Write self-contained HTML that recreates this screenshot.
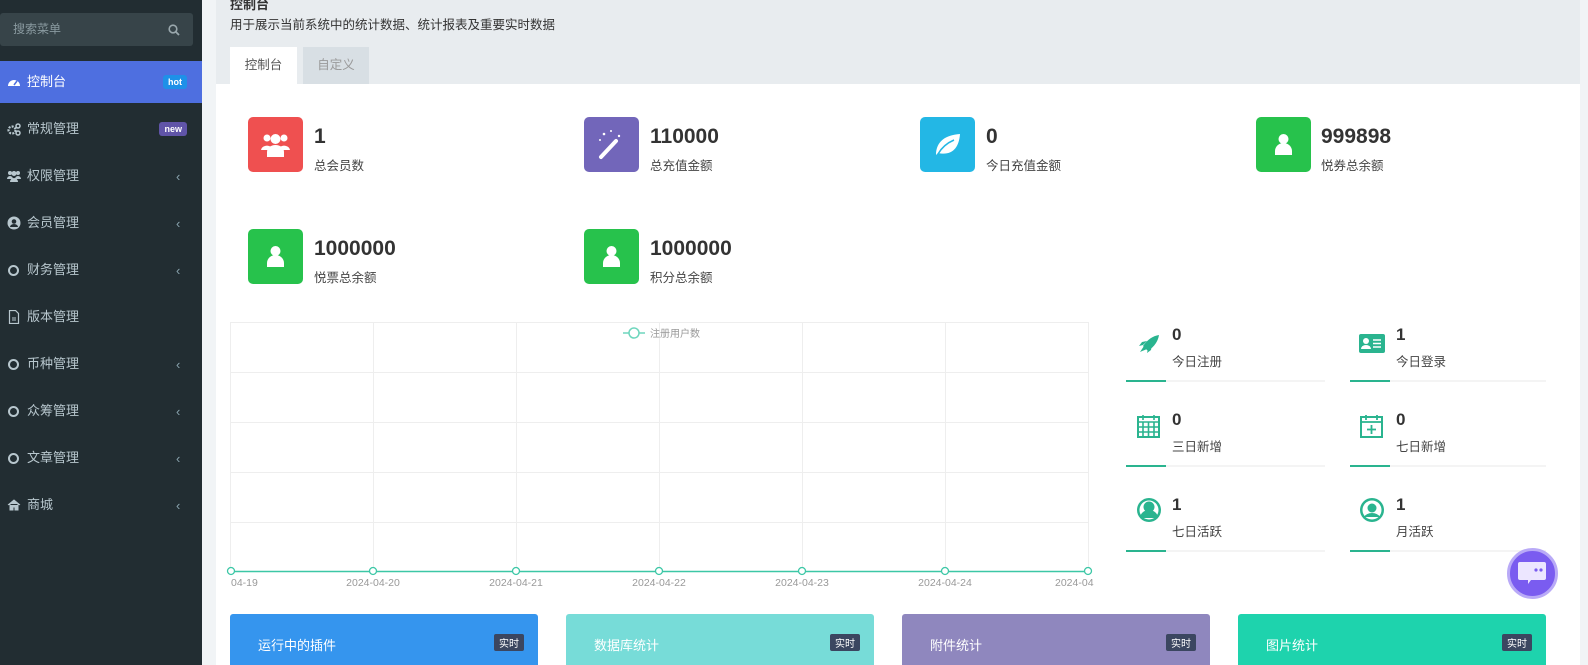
<!DOCTYPE html>
<html><head><meta charset="utf-8"><style>
*{margin:0;padding:0;box-sizing:border-box}
body{width:1588px;height:665px;overflow:hidden;background:#f1f4f6;font-family:"Liberation Sans","Noto Sans CJK SC",sans-serif;position:relative}
.a{position:absolute}
#sb{left:0;top:0;width:202px;height:665px;background:#222d32}
.mi{position:absolute;left:0;width:202px;height:42px;color:#b8c7ce;font-size:13px;line-height:42px;padding-left:27px}
.mi svg{position:absolute;left:7px;top:14px}
.mi .ar{position:absolute;left:176px;top:1px;font-size:13px;color:#8aa4af}
.badge{position:absolute;right:15px;top:14px;height:14px;line-height:14px;font-size:9px;font-weight:bold;color:#fff;padding:0 5px;border-radius:3px}
.circ{position:absolute;left:8px;top:16px;width:11px;height:11px;border:2px solid #b8c7ce;border-radius:50%}
.sq{left:248px;width:55px;height:55px;border-radius:5px}
.num{font-size:21px;font-weight:bold;color:#333}
.lbl{font-size:12.5px;color:#444}
.rs .n{font-size:17px;color:#333;font-weight:bold}
.rs .l{font-size:12.5px;color:#444}
.card{top:614px;height:51px;border-radius:3px 3px 0 0;color:#fff;font-size:13px}
.card span.t{position:absolute;left:28px;top:21px}
.card span.b{position:absolute;right:14px;top:20px;background:#3b4660;font-size:10px;padding:1px 5px;border-radius:2px}
.xl{font-size:10.5px;color:#999;top:577px;width:80px;text-align:center}
</style></head><body>
<div id="sb" class="a">
 <div class="a" style="left:0;top:13px;width:193px;height:33px;background:#374449;border-radius:3px;color:#8a9aa0;font-size:12px;line-height:33px;padding-left:13px">搜索菜单
  <svg class="a" style="left:168px;top:11px" width="12" height="12" viewBox="0 0 12 12"><circle cx="5" cy="5" r="3.8" fill="none" stroke="#9aa8ad" stroke-width="1.6"/><path d="M8 8l3 3" stroke="#9aa8ad" stroke-width="1.8"/></svg></div>
 <div class="mi" style="top:61px;background:#4e6fe0;color:#fff"><svg width="14" height="14"><path d="M1 11a6 6 0 0 1 12 0z" fill="#fff"/><path d="M7 10l3-4" stroke="#4e6fe0" stroke-width="1.5"/></svg>控制台<span class="badge" style="background:#1e90e8">hot</span></div>
 <div class="mi" style="top:108px"><svg width="14" height="14"><circle cx="5" cy="8" r="3.5" fill="none" stroke="#b8c7ce" stroke-width="2.2" stroke-dasharray="2 1.2"/><circle cx="11" cy="4" r="2" fill="none" stroke="#b8c7ce" stroke-width="1.5"/><circle cx="11" cy="11" r="2" fill="none" stroke="#b8c7ce" stroke-width="1.5"/></svg>常规管理<span class="badge" style="background:#6054a8">new</span></div>
 <div class="mi" style="top:155px"><svg width="14" height="14"><g fill="#b8c7ce"><circle cx="3" cy="4" r="2"/><circle cx="11" cy="4" r="2"/><circle cx="7" cy="4.5" r="2.5"/><path d="M0 10a3 3 0 0 1 6 0zM8 10a3 3 0 0 1 6 0zM3 13a4 4 0 0 1 8 0z"/></g></svg>权限管理<span class="ar">‹</span></div>
 <div class="mi" style="top:202px"><svg width="14" height="14"><circle cx="7" cy="7" r="6.5" fill="#b8c7ce"/><circle cx="7" cy="5.5" r="2.3" fill="#222d32"/><path d="M3 11a4 3 0 0 1 8 0z" fill="#222d32"/></svg>会员管理<span class="ar">‹</span></div>
 <div class="mi" style="top:249px"><span class="circ"></span>财务管理<span class="ar">‹</span></div>
 <div class="mi" style="top:296px"><svg width="14" height="14"><path d="M2.5 0.5h6l3 3v10h-9z" fill="none" stroke="#b8c7ce" stroke-width="1.2"/><path d="M5 8h4M5 10h4" stroke="#b8c7ce"/></svg>版本管理</div>
 <div class="mi" style="top:343px"><span class="circ"></span>币种管理<span class="ar">‹</span></div>
 <div class="mi" style="top:390px"><span class="circ"></span>众筹管理<span class="ar">‹</span></div>
 <div class="mi" style="top:437px"><span class="circ"></span>文章管理<span class="ar">‹</span></div>
 <div class="mi" style="top:484px"><svg width="14" height="14"><path d="M1 7l6-5 6 5M3 6v6h3v-3h2v3h3V6" fill="#b8c7ce" stroke="#b8c7ce" stroke-width="1"/></svg>商城<span class="ar">‹</span></div>
</div>
<div class="a" style="left:216px;top:0;width:1364px;height:84px;background:#e8ecef"></div>
<div class="a" style="left:230px;top:-6px;font-size:13px;font-weight:bold;color:#333">控制台</div>
<div class="a" style="left:230px;top:14px;font-size:12.5px;color:#333">用于展示当前系统中的统计数据、统计报表及重要实时数据</div>
<div class="a" style="left:230px;top:47px;width:67px;height:37px;background:#fff;color:#555;font-size:12.5px;text-align:center;line-height:37px">控制台</div>
<div class="a" style="left:303px;top:47px;width:66px;height:37px;background:#d8dfe4;color:#999;font-size:12.5px;text-align:center;line-height:37px">自定义</div>
<div class="a" style="left:216px;top:84px;width:1364px;height:581px;background:#fff"></div>

<div class="a sq" style="top:117px;background:#ef5050"><svg width="55" height="55"><g fill="#fff"><circle cx="19" cy="21" r="3.5"/><circle cx="36" cy="21" r="3.5"/><circle cx="27.5" cy="22" r="5"/><path d="M13 33a6 5 0 0 1 10-3v3zM42 33a6 5 0 0 0-10-3v3z"/><path d="M19 40v-5a8.5 7 0 0 1 17 0v5z"/></g></svg></div>
<div class="a num" style="left:314px;top:125px">1</div><div class="a lbl" style="left:314px;top:155px">总会员数</div>
<div class="a sq" style="left:584px;top:117px;background:#7266ba"><svg width="55" height="55"><path d="M17 40l15-16" stroke="#fff" stroke-width="4" stroke-linecap="round"/><g fill="#fff"><circle cx="20" cy="17" r="1.3"/><circle cx="27" cy="14" r="1"/><circle cx="16" cy="23" r="1"/><circle cx="35" cy="19" r="1.2"/></g></svg></div>
<div class="a num" style="left:650px;top:125px">110000</div><div class="a lbl" style="left:650px;top:155px">总充值金额</div>
<div class="a sq" style="left:920px;top:117px;background:#23b7e5"><svg width="55" height="55"><path d="M16 38c0-14 10-20 24-21-1 14-8 22-22 19z" fill="#fff"/><path d="M18 37c4-7 9-11 16-14" stroke="#23b7e5" stroke-width="1.5" fill="none"/></svg></div>
<div class="a num" style="left:986px;top:125px">0</div><div class="a lbl" style="left:986px;top:155px">今日充值金额</div>
<div class="a sq" style="left:1256px;top:117px;background:#27c24c"><svg width="55" height="55"><g fill="#fff"><circle cx="27.5" cy="22" r="5"/><path d="M19 38v-4a8.5 8 0 0 1 17 0v4z"/></g></svg></div>
<div class="a num" style="left:1321px;top:125px">999898</div><div class="a lbl" style="left:1321px;top:155px">悦券总余额</div>
<div class="a sq" style="top:229px;background:#27c24c"><svg width="55" height="55"><g fill="#fff"><circle cx="27.5" cy="22" r="5"/><path d="M19 38v-4a8.5 8 0 0 1 17 0v4z"/></g></svg></div>
<div class="a num" style="left:314px;top:237px">1000000</div><div class="a lbl" style="left:314px;top:267px">悦票总余额</div>
<div class="a sq" style="left:584px;top:229px;background:#27c24c"><svg width="55" height="55"><g fill="#fff"><circle cx="27.5" cy="22" r="5"/><path d="M19 38v-4a8.5 8 0 0 1 17 0v4z"/></g></svg></div>
<div class="a num" style="left:650px;top:237px">1000000</div><div class="a lbl" style="left:650px;top:267px">积分总余额</div>

<svg class="a" style="left:225px;top:318px" width="875" height="260">
<g stroke="#eee" stroke-width="1">
<path d="M5 4.5H863M5 54.5H863M5 104.5H863M5 154.5H863M5 204.5H863"/>
<path d="M5.5 4V254M148.5 4V254M291.5 4V254M434.5 4V254M577.5 4V254M720.5 4V254M863.5 4V254"/>
</g>
<path d="M5 253.5H863" stroke="#3cc7a6" stroke-width="1.5"/>
<g fill="#fff" stroke="#3cc7a6" stroke-width="1.3"><circle cx="6" cy="253" r="3.5"/><circle cx="148" cy="253" r="3.5"/><circle cx="291" cy="253" r="3.5"/><circle cx="434" cy="253" r="3.5"/><circle cx="577" cy="253" r="3.5"/><circle cx="720" cy="253" r="3.5"/><circle cx="863" cy="253" r="3.5"/></g>
<path d="M398 15h22" stroke="#6fd6bd" stroke-width="1.5"/><circle cx="409" cy="15" r="5" fill="#fff" stroke="#6fd6bd" stroke-width="1.5"/>
<text x="425" y="19" font-size="10" fill="#999" font-family="Liberation Sans,Noto Sans CJK SC,sans-serif">注册用户数</text>
</svg>
<div class="a xl" style="left:231px;text-align:left">04-19</div>
<div class="a xl" style="left:333px">2024-04-20</div>
<div class="a xl" style="left:476px">2024-04-21</div>
<div class="a xl" style="left:619px">2024-04-22</div>
<div class="a xl" style="left:762px">2024-04-23</div>
<div class="a xl" style="left:905px">2024-04-24</div>
<div class="a xl" style="left:1055px;width:45px;overflow:hidden;text-align:left">2024-04</div>

<div class="rs">
<svg class="a" style="left:1137px;top:334px" width="24" height="22"><path d="M3 18l4-6 3 3zM6 12c5-7 10-10 16-11-1 6-4 11-11 16zM10 7l-5 1-3 4 4-1zM15 11l-1 5-4 3 1-4z" fill="#2ab48f"/></svg>
<div class="a n" style="left:1172px;top:325px">0</div><div class="a l" style="left:1172px;top:351px">今日注册</div>
<svg class="a" style="left:1359px;top:334px" width="26" height="22"><rect x="0" y="0" width="26" height="19" rx="2" fill="#2ab48f"/><circle cx="7" cy="7" r="3" fill="#fff"/><path d="M2 15a5 4 0 0 1 10 0z" fill="#fff"/><path d="M14 6h8M14 9.5h8M14 13h8" stroke="#fff" stroke-width="1.5"/></svg>
<div class="a n" style="left:1396px;top:325px">1</div><div class="a l" style="left:1396px;top:351px">今日登录</div>
<svg class="a" style="left:1137px;top:413px" width="24" height="26"><rect x="1" y="4" width="21" height="20" fill="none" stroke="#2ab48f" stroke-width="2"/><path d="M1 9h21M6 2v5M17 2v5M1 14h21M1 19h21M6 9v15M11.5 9v15M17 9v15" stroke="#2ab48f" stroke-width="1.6"/></svg>
<div class="a n" style="left:1172px;top:410px">0</div><div class="a l" style="left:1172px;top:436px">三日新增</div>
<svg class="a" style="left:1360px;top:413px" width="24" height="26"><rect x="1" y="4" width="21" height="20" fill="none" stroke="#2ab48f" stroke-width="2"/><path d="M1 9h21M6 2v5M17 2v5M11.5 12v9M7 16.5h9" stroke="#2ab48f" stroke-width="1.8"/></svg>
<div class="a n" style="left:1396px;top:410px">0</div><div class="a l" style="left:1396px;top:436px">七日新增</div>
<svg class="a" style="left:1136px;top:497px" width="26" height="26"><circle cx="13" cy="13" r="12" fill="#2ab48f"/><circle cx="13" cy="13" r="9.5" fill="#fff"/><circle cx="13" cy="10" r="5.5" fill="#2ab48f"/><path d="M4 21a9 8 0 0 1 18 0z" fill="#2ab48f"/></svg>
<div class="a n" style="left:1172px;top:495px">1</div><div class="a l" style="left:1172px;top:521px">七日活跃</div>
<svg class="a" style="left:1359px;top:497px" width="26" height="26"><circle cx="13" cy="13" r="12" fill="#2ab48f"/><circle cx="13" cy="13" r="9.5" fill="#fff"/><circle cx="13" cy="11" r="4.5" fill="#2ab48f"/><path d="M5 20a8.5 6 0 0 1 16 0z" fill="#2ab48f"/></svg>
<div class="a n" style="left:1396px;top:495px">1</div><div class="a l" style="left:1396px;top:521px">月活跃</div>
</div>
<div class="a" style="left:1126px;top:380px;width:199px;height:2px;background:#f4f4f4"><div style="width:40px;height:2px;background:#2ab48f"></div></div>
<div class="a" style="left:1350px;top:380px;width:196px;height:2px;background:#f4f4f4"><div style="width:40px;height:2px;background:#2ab48f"></div></div>
<div class="a" style="left:1126px;top:465px;width:199px;height:2px;background:#f4f4f4"><div style="width:40px;height:2px;background:#2ab48f"></div></div>
<div class="a" style="left:1350px;top:465px;width:196px;height:2px;background:#f4f4f4"><div style="width:40px;height:2px;background:#2ab48f"></div></div>
<div class="a" style="left:1126px;top:550px;width:199px;height:2px;background:#f4f4f4"><div style="width:40px;height:2px;background:#2ab48f"></div></div>
<div class="a" style="left:1350px;top:550px;width:196px;height:2px;background:#f4f4f4"><div style="width:40px;height:2px;background:#2ab48f"></div></div>

<div class="a" style="left:1507px;top:548px;width:51px;height:51px;border-radius:50%;background:#7a5cf0;border:3px solid #b9aaf7"></div>
<svg class="a" style="left:1517px;top:560px" width="32" height="28"><path d="M3 2h24a2 2 0 0 1 2 2v14a2 2 0 0 1-2 2H14l-3 4v-4H3a2 2 0 0 1-2-2V4a2 2 0 0 1 2-2z" fill="#ece6ff"/><circle cx="19" cy="10" r="1.6" fill="#7a5cf0"/><circle cx="24" cy="10" r="1.6" fill="#7a5cf0"/></svg>

<div class="a card" style="left:230px;width:308px;background:#3595ee"><span class="t">运行中的插件</span><span class="b">实时</span></div>
<div class="a card" style="left:566px;width:308px;background:#77dcd8"><span class="t">数据库统计</span><span class="b">实时</span></div>
<div class="a card" style="left:902px;width:308px;background:#8f87be"><span class="t">附件统计</span><span class="b">实时</span></div>
<div class="a card" style="left:1238px;width:308px;background:#1ed3ad"><span class="t">图片统计</span><span class="b">实时</span></div>
</body></html>
